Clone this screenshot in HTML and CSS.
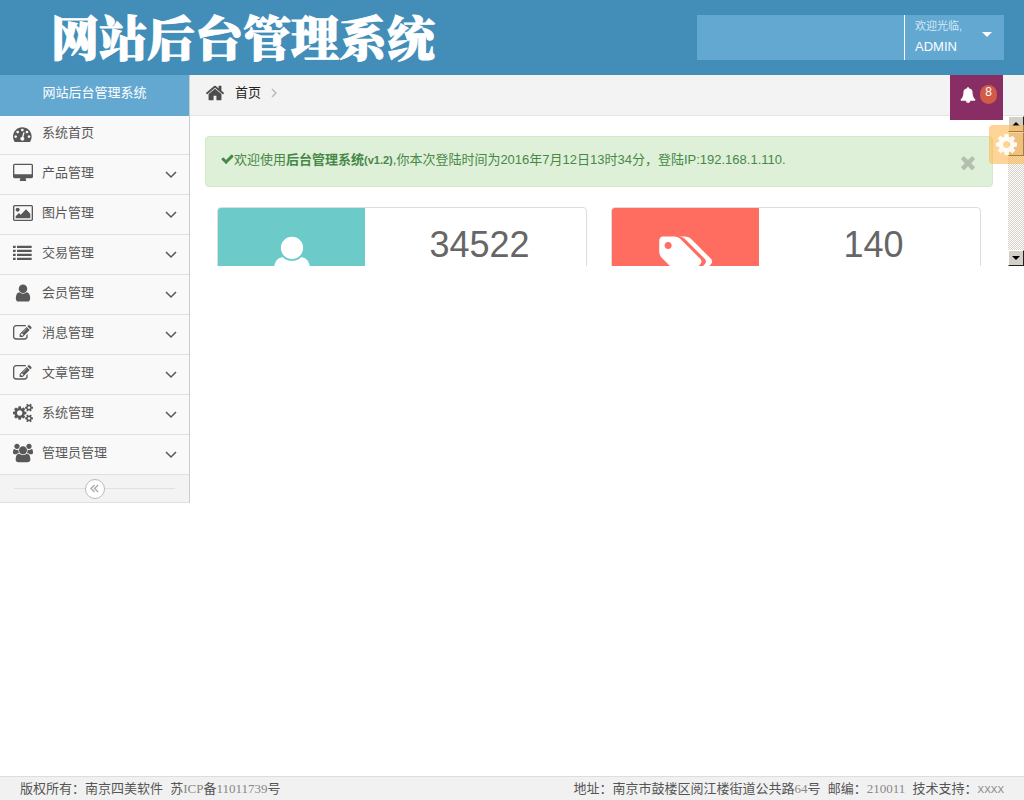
FILE: index.html
```html
<!DOCTYPE html>
<html lang="zh-CN">
<head>
<meta charset="utf-8">
<meta name="viewport" content="width=device-width, initial-scale=1">
<title>网站后台管理系统</title>
<link rel="stylesheet" href="styles.css">
</head>
<body>
<svg class="sprite" aria-hidden="true">
  <symbol id="i-home" viewBox="0 0 1792 1792"><path d="M1472 992v480q0 26-19 45t-45 19h-384v-384h-256v384h-384q-26 0-45-19t-19-45v-480q0-1 .5-3t.5-3l575-474 575 474q1 2 1 6zm223-69l-62 74q-8 9-21 11h-3q-13 0-21-7l-692-577-692 577q-12 8-24 7-13-2-21-11l-62-74q-8-10-7-23.500t11-21.500l719-599q32-26 76-26t76 26l244 204v-195q0-14 9-23t23-9h192q14 0 23 9t9 23v408l219 182q10 8 11 21.500t-7 23.500z"/></symbol>
  <symbol id="i-dash" viewBox="0 0 1920 1792"><path d="M384 1152q0-53-37.500-90.500t-90.500-37.500-90.500 37.500-37.500 90.500 37.500 90.500 90.500 37.500 90.500-37.500 37.500-90.500zm192-448q0-53-37.500-90.500t-90.500-37.500-90.500 37.500-37.500 90.500 37.500 90.500 90.500 37.500 90.500-37.500 37.500-90.500zm428 481l101-382q6-26-7.500-48.500t-38.500-29.500-48 6.500-30 39.500l-101 382q-60 5-107 43.500t-63 98.500q-20 77 20 146t117 89 146-20 89-117q16-60-6-117t-72-91zm660-33q0-53-37.500-90.500t-90.500-37.500-90.500 37.500-37.500 90.500 37.500 90.500 90.500 37.500 90.500-37.500 37.500-90.500zm-640-640q0-53-37.500-90.500t-90.500-37.500-90.500 37.500-37.500 90.500 37.500 90.500 90.500 37.500 90.500-37.500 37.500-90.500zm448 192q0-53-37.500-90.500t-90.500-37.500-90.500 37.500-37.500 90.500 37.500 90.500 90.500 37.500 90.500-37.500 37.500-90.500zm320 448q0 261-141 483-19 29-54 29h-1402q-35 0-54-29-141-221-141-483 0-182 71-348t191-286 286-191 348-71 348 71 286 191 191 286 71 348z"/></symbol>
  <symbol id="i-desktop" viewBox="0 0 1920 1792"><path d="M1792 992v-832q0-13-9.500-22.500t-22.500-9.500h-1600q-13 0-22.500 9.500t-9.500 22.500v832q0 13 9.500 22.500t22.500 9.500h1600q13 0 22.500-9.500t9.500-22.500zm128-832v1088q0 66-47 113t-113 47h-544q0 37 16 77.500t32 71 16 43.500q0 26-19 45t-45 19h-512q-26 0-45-19t-19-45q0-14 16-44t32-70 16-78h-544q-66 0-113-47t-47-113v-1088q0-66 47-113t113-47h1600q66 0 113 47t47 113z"/></symbol>
  <symbol id="i-picture" viewBox="-64 0 1920 1792"><path d="M576 576q0 80-56 136t-136 56-136-56-56-136 56-136 136-56 136 56 56 136zm1024 384v448h-1408v-192l320-320 160 160 512-512zm96-704h-1600q-13 0-22.500 9.500t-9.500 22.500v1216q0 13 9.500 22.500t22.500 9.500h1600q13 0 22.500-9.500t9.500-22.500v-1216q0-13-9.500-22.500t-22.500-9.500zm160 32v1216q0 66-47 113t-113 47h-1600q-66 0-113-47t-47-113v-1216q0-66 47-113t113-47h1600q66 0 113 47t47 113z"/></symbol>
  <symbol id="i-list" viewBox="0 0 1920 1792"><path d="M0 192h256v224H0zM384 192h1408v224H384zM0 576h256v224H0zM384 576h1408v224H384zM0 960h256v224H0zM384 960h1408v224H384zM0 1344h256v224H0zM384 1344h1408v224H384z"/></symbol>
  <symbol id="i-user" viewBox="0 0 1792 1792"><path d="M1536 1399q0 109-62.500 187t-150.500 78h-854q-88 0-150.500-78t-62.500-187q0-85 8.500-160.500t31.500-152 58.500-131 94-89 134.500-34.500q131 128 313 128t313-128q76 0 134.500 34.500t94 89 58.500 131 31.500 152 8.500 160.500zm-256-887q0 159-112.500 271.500t-271.500 112.500-271.500-112.500-112.500-271.500 112.500-271.500 271.500-112.500 271.500 112.500 112.500 271.500z"/></symbol>
  <symbol id="i-edit" viewBox="0 0 1920 1792"><path d="M888 1184l116-116-152-152-116 116v56h96v96h56zm440-720q-16-16-33 1l-350 350q-17 17-1 33t33-1l350-350q17-17 1-33zm80 594v190q0 119-84.500 203.500t-203.500 84.500h-832q-119 0-203.500-84.500t-84.500-203.500v-832q0-119 84.500-203.500t203.500-84.500h832q63 0 117 25 15 7 18 23 3 17-9 29l-49 49q-14 14-32 8-23-6-45-6h-832q-66 0-113 47t-47 113v832q0 66 47 113t113 47h832q66 0 113-47t47-113v-126q0-13 9-22l64-64q15-15 35-7t20 29zm-96-738l288 288-672 672h-288v-288zm444 132l-92 92-288-288 92-92q28-28 68-28t68 28l152 152q28 28 28 68t-28 68z"/></symbol>
  <symbol id="i-cogs" viewBox="0 0 1920 1792"><path d="M896 896q0-106-75-181t-181-75-181 75-75 181 75 181 181 75 181-75 75-181zm768 512q0-52-38-90t-90-38-90 38-38 90q0 53 37.500 90.500t90.500 37.500 90.500-37.500 37.500-90.500zm0-1024q0-52-38-90t-90-38-90 38-38 90q0 53 37.500 90.500t90.500 37.500 90.500-37.500 37.500-90.500zm-384 421v185q0 10-7 19.500t-16 10.500l-155 24q-11 35-32 76 34 48 90 115 7 11 7 20 0 12-7 19-23 30-82.500 89.500t-78.500 59.500q-11 0-21-7l-115-90q-37 19-77 31-11 108-23 155-7 24-30 24h-186q-11 0-20-7.500t-10-17.500l-23-153q-34-10-75-31l-118 89q-7 7-20 7-11 0-21-8-144-133-144-160 0-9 7-19 10-14 41-53t47-61q-23-44-35-82l-152-24q-10-1-17-9.500t-7-19.500v-185q0-10 7-19.500t16-10.500l155-24q11-35 32-76-34-48-90-115-7-11-7-20 0-12 7-20 22-30 82-89t79-59q11 0 21 7l115 90q34-18 77-32 11-108 23-154 7-24 30-24h186q11 0 20 7.500t10 17.500l23 153q34 10 75 31l118-89q8-7 20-7 11 0 21 8 144 133 144 160 0 8-7 19-12 16-42 54t-45 60q23 48 34 82l152 23q10 2 17 10.500t7 19.500zm640 533v140q0 16-149 31-12 27-30 52 51 113 51 138 0 4-4 7-122 71-124 71-8 0-46-47t-52-68q-20 2-30 2t-30-2q-14 21-52 68t-46 47q-2 0-124-71-4-3-4-7 0-25 51-138-18-25-30-52-149-15-149-31v-140q0-16 149-31 13-29 30-52-51-113-51-138 0-4 4-7 4-2 35-20t59-34 30-16q8 0 46 46.500t52 67.500q20-2 30-2t30 2q51-71 92-112l6-2q4 0 124 70 4 3 4 7 0 25-51 138 17 23 30 52 149 15 149 31zm0-1024v140q0 16-149 31-12 27-30 52 51 113 51 138 0 4-4 7-122 71-124 71-8 0-46-47t-52-68q-20 2-30 2t-30-2q-14 21-52 68t-46 47q-2 0-124-71-4-3-4-7 0-25 51-138-18-25-30-52-149-15-149-31v-140q0-16 149-31 13-29 30-52-51-113-51-138 0-4 4-7 4-2 35-20t59-34 30-16q8 0 46 46.500t52 67.500q20-2 30-2t30 2q51-71 92-112l6-2q4 0 124 70 4 3 4 7 0 25-51 138 17 23 30 52 149 15 149 31z"/></symbol>
  <symbol id="i-users" viewBox="0 0 1920 1792"><path d="M593 896q-162 5-265 128h-134q-82 0-138-40.500t-56-118.500q0-353 124-353 6 0 43.500 21t97.500 42.500 119 21.500q67 0 133-23-5 37-5 66 0 139 81 256zm1071 637q0 120-73 189.500t-194 69.500h-874q-121 0-194-69.500t-73-189.500q0-53 3.500-103.500t14-109 26.500-108.500 43-97.500 62-81 85.500-53.500 111.500-20q10 0 43 21.500t73 48 107 48 135 21.500 135-21.500 107-48 73-48 43-21.500q61 0 111.500 20t85.500 53.500 62 81 43 97.500 26.500 108.500 14 109 3.500 103.500zm-1024-1277q0 106-75 181t-181 75-181-75-75-181 75-181 181-75 181 75 75 181zm704 384q0 159-112.500 271.500t-271.500 112.500-271.500-112.500-112.500-271.500 112.500-271.500 271.500-112.500 271.500 112.500 112.500 271.500zm576 225q0 78-56 118.500t-138 40.500h-134q-103-123-265-128 81-117 81-256 0-29-5-66 66 23 133 23 59 0 119-21.500t97.500-42.500 43.500-21q124 0 124 353zm-128-609q0 106-75 181t-181 75-181-75-75-181 75-181 181-75 181 75 75 181z"/></symbol>
  <symbol id="i-cog" viewBox="128 128 1536 1536"><path d="M1152 896q0-106-75-181t-181-75-181 75-75 181 75 181 181 75 181-75 75-181zm512-109v222q0 12-8 23t-20 13l-185 28q-19 54-39 91 35 50 107 138 10 12 10 25t-9 23q-27 37-99 108t-94 71q-12 0-26-9l-138-108q-44 23-91 38-16 136-29 186-7 28-36 28h-222q-14 0-24.500-8.500t-11.500-21.500l-28-184q-49-16-90-37l-141 107q-10 9-25 9-14 0-25-11-126-114-165-168-7-10-7-23 0-12 8-23 15-21 51-66.500t54-70.500q-27-50-41-99l-183-27q-13-2-21-12.500t-8-23.500v-222q0-12 8-23t19-13l186-28q14-46 39-92-40-57-107-138-10-12-10-24 0-10 9-23 26-36 98.500-107.500t94.500-71.500q13 0 26 10l138 107q44-23 91-38 16-136 29-186 7-28 36-28h222q14 0 24.500 8.500t11.500 21.500l28 184q49 16 90 37l142-107q9-9 24-9 13 0 25 10 129 119 165 170 7 8 7 22 0 12-8 23-15 21-51 66.500t-54 70.500q26 50 41 98l183 28q13 2 21 12.500t8 23.500z"/></symbol>
  <symbol id="i-bell" viewBox="0 0 1792 1792"><path d="M912 1696q0-16-16-16-59 0-101.500-42.500t-42.500-101.500q0-16-16-16t-16 16q0 73 51.500 124.500t124.500 51.500q16 0 16-16zm816-288q0 52-38 90t-90 38h-448q0 106-75 181t-181 75-181-75-75-181h-448q-52 0-90-38t-38-90q50-42 91-88t85-119.500 74.500-158.500 50-206 19.500-260q0-152 117-282.500t307-158.500q-8-19-8-39 0-40 28-68t68-28 68 28 28 68q0 20-8 39 190 28 307 158.500t117 282.500q0 139 19.500 260t50 206 74.500 158.500 85 119.500 91 88z"/></symbol>
  <symbol id="i-tags" viewBox="0 0 1920 1792"><path d="M448 448q0-53-37.500-90.500t-90.500-37.500-90.500 37.500-37.500 90.500 37.500 90.500 90.500 37.500 90.500-37.500 37.500-90.500zm1067 576q0 53-37 90l-491 492q-39 37-91 37-53 0-90-37l-715-716q-38-37-64.500-101t-26.500-117v-416q0-52 38-90t90-38h416q53 0 117 26.500t102 64.500l715 714q37 39 37 91zm384 0q0 53-37 90l-491 492q-39 37-91 37-36 0-59-14t-53-45l470-470q37-37 37-90 0-52-37-91l-715-714q-38-38-102-64.500t-117-26.500h224q53 0 117 26.500t102 64.500l715 714q37 39 37 91z"/></symbol>
  <symbol id="i-check" viewBox="100 128 1600 1536"><path d="M1671 566q0 40-28 68l-724 724-136 136q-28 28-68 28t-68-28l-136-136-362-362q-28-28-28-68t28-68l136-136q28-28 68-28t68 28l294 295 656-657q28-28 68-28t68 28l136 136q28 28 28 68z"/></symbol>
  <symbol id="i-times" viewBox="302 334 1188 1220"><path d="M1490 1322q0 40-28 68l-136 136q-28 28-68 28t-68-28l-294-294-294 294q-28 28-68 28t-68-28l-136-136q-28-28-28-68t28-68l294-294-294-294q-28-28-28-68t28-68l136-136q28-28 68-28t68 28l294 294 294-294q28-28 68-28t68 28l136 136q28 28 28 68t-28 68l-294 294 294 294q28 28 28 68z"/></symbol>
  <symbol id="i-down" viewBox="0 0 12 8"><path class="line" d="M1 1l5 5 5-5"/></symbol>
</svg>

<header class="header">
  <h1 class="logo">网站后台管理系统</h1>
  <div class="userbar">
    <button class="user" type="button">
      <span class="user-text"><small class="welcome">欢迎光临,</small><span class="name">ADMIN</span></span>
      <span class="caret"></span>
    </button>
  </div>
</header>

<div class="main">
  <nav class="sidebar">
    <h2 class="side-title">网站后台管理系统</h2>
    <ul class="menu">
      <li><a href="#"><svg class="ico"><use href="#i-dash"/></svg><span>系统首页</span></a></li>
      <li><a href="#"><svg class="ico"><use href="#i-desktop"/></svg><span>产品管理</span><svg class="down"><use href="#i-down"/></svg></a></li>
      <li><a href="#"><svg class="ico"><use href="#i-picture"/></svg><span>图片管理</span><svg class="down"><use href="#i-down"/></svg></a></li>
      <li><a href="#"><svg class="ico"><use href="#i-list"/></svg><span>交易管理</span><svg class="down"><use href="#i-down"/></svg></a></li>
      <li><a href="#"><svg class="ico"><use href="#i-user"/></svg><span>会员管理</span><svg class="down"><use href="#i-down"/></svg></a></li>
      <li><a href="#"><svg class="ico"><use href="#i-edit"/></svg><span>消息管理</span><svg class="down"><use href="#i-down"/></svg></a></li>
      <li><a href="#"><svg class="ico"><use href="#i-edit"/></svg><span>文章管理</span><svg class="down"><use href="#i-down"/></svg></a></li>
      <li><a href="#"><svg class="ico"><use href="#i-cogs"/></svg><span>系统管理</span><svg class="down"><use href="#i-down"/></svg></a></li>
      <li><a href="#"><svg class="ico"><use href="#i-users"/></svg><span>管理员管理</span><svg class="down"><use href="#i-down"/></svg></a></li>
    </ul>
    <div class="collapse">
      <button class="collapse-btn" type="button" aria-label="收起菜单"><svg class="dbl" viewBox="0 0 10 10"><path class="line" d="M5 1L1 5l4 4M9 1L5 5l4 4"/></svg></button>
    </div>
  </nav>

  <div class="content">
    <div class="crumbs">
      <svg class="home"><use href="#i-home"/></svg>
      <a class="crumb" href="#">首页</a>
      <svg class="sep" viewBox="0 0 6 10"><path class="line" d="M1 1l4 4-4 4"/></svg>
      <button class="notice" type="button" aria-label="通知"><svg class="bell"><use href="#i-bell"/></svg><span class="badge">8</span></button>
    </div>

    <div class="frame">
      <div class="page">
        <div class="alert">
          <p class="alert-text"><svg class="check"><use href="#i-check"/></svg>欢迎使用<strong>后台管理系统<small>(v1.2)</small></strong>,你本次登陆时间为2016年7月12日13时34分，登陆IP:192.168.1.110.</p>
          <button class="close" type="button" aria-label="关闭"><svg class="times"><use href="#i-times"/></svg></button>
        </div>
        <div class="cards">
          <section class="card">
            <div class="card-icon teal"><svg class="big-user"><use href="#i-user"/></svg></div>
            <div class="card-num">34522</div>
          </section>
          <section class="card">
            <div class="card-icon red"><svg class="big-tags"><use href="#i-tags"/></svg></div>
            <div class="card-num">140</div>
          </section>
        </div>
      </div>
      <div class="scroll" aria-hidden="true">
        <span class="sbtn"><i class="up"></i></span>
        <span class="thumb"></span>
        <span class="sbtn last"><i class="dn"></i></span>
      </div>
      <button class="settings" type="button" aria-label="设置"><svg class="cog"><use href="#i-cog"/></svg></button>
    </div>
  </div>
</div>

<footer class="footer">
  <span>版权所有：南京四美软件&nbsp; 苏<span class="lat">ICP</span>备<span class="lat">11011739</span>号</span>
  <span>地址：南京市鼓楼区阅江楼街道公共路<span class="lat">64</span>号&nbsp; 邮编：<span class="lat">210011</span>&nbsp; 技术支持：<span class="mono">XXXX</span></span>
</footer>
</body>
</html>
```
FILE: styles.css
```css
* { box-sizing: border-box; }
body {
  margin: 0;
  min-height: 100vh;
  display: flex;
  flex-direction: column;
  background: #fff;
  color: #393939;
  font: 13px/20px "Liberation Sans", "Noto Sans CJK SC", sans-serif;
}
h1, h2, p, ul { margin: 0; padding: 0; font-weight: normal; }
ul { list-style: none; }
a { color: inherit; text-decoration: none; }
button { font: inherit; color: inherit; border: 0; padding: 0; background: none; cursor: pointer; }
svg { display: block; fill: currentColor; flex: none; }
.sprite { position: absolute; width: 0; height: 0; }
.line { fill: none; stroke: currentColor; stroke-width: 1.5; }

.header {
  display: flex;
  justify-content: space-between;
  align-items: center;
  height: 75px;
  padding: 0 20px 0 51px;
  background: #438eb9;
  color: #fff;
}
.logo {
  padding-bottom: 4px;
  font: 900 48px/70px "Noto Serif CJK SC", "Noto Sans CJK SC", serif;
  -webkit-text-stroke: 1px #fff;
  white-space: nowrap;
}
.userbar {
  display: flex;
  justify-content: flex-end;
  width: 30vw;
  height: 45px;
  background: #62a8d1;
}
.user {
  display: flex;
  align-items: center;
  justify-content: space-between;
  width: 100px;
  padding: 0 12px 0 10px;
  border-left: 1px solid #fff;
  text-align: left;
}
.user-text { display: flex; flex-direction: column; padding-bottom: 2px; }
.welcome { font-size: 11px; color: #d5e8f4; }
.name { font-size: 13px; line-height: 22px; }
.caret {
  margin-bottom: 7px;
  border: 5px solid transparent;
  border-top-color: #fff;
  border-bottom: 0;
}

.main { display: flex; flex: 1; align-items: flex-start; }
.sidebar {
  flex: none;
  width: 190px;
  border-right: 1px solid #ccc;
  background: #f9f9f9;
}
.side-title {
  height: 41px;
  background: #62a8d1;
  color: #fff;
  font-size: 13px;
  line-height: 36px;
  text-align: center;
}
.menu li { height: 40px; border-bottom: 1px solid #e0e0e0; }
.menu li:first-child { height: 39px; }
.menu a {
  display: flex;
  align-items: center;
  gap: 9px;
  height: 100%;
  padding: 0 12px 0 13px;
  color: #585858;
}
.menu span { flex: 1; padding-bottom: 4px; }
.ico { width: 20px; height: 20px; margin-bottom: 3px; }
.down { width: 12px; height: 8px; }
.collapse {
  display: flex;
  align-items: center;
  height: 28px;
  padding: 0 14px;
  border-bottom: 1px solid #e0e0e0;
  background: #f3f3f3;
}
.collapse::before, .collapse::after { content: ""; flex: 1; height: 1px; background: #e0e0e0; }
.collapse-btn {
  display: grid;
  place-items: center;
  width: 20px;
  height: 20px;
  border: 1px solid #bbb;
  border-radius: 50%;
  background: #fff;
  color: #aaa;
}
.dbl { width: 9px; height: 9px; }

.content { flex: 1; min-width: 0; }
.crumbs {
  display: flex;
  align-items: center;
  height: 41px;
  padding: 0 21px 4px 15px;
  border-bottom: 1px solid #e5e5e5;
  background: #f3f3f3;
}
.home { width: 20px; height: 20px; color: #4c4c4c; }
.crumb { margin: 0 10px; color: #222; }
.sep { width: 6px; height: 10px; color: #bbb; }
.notice {
  display: flex;
  align-items: center;
  align-self: flex-start;
  gap: 4px;
  width: 53px;
  height: 45px;
  margin-left: auto;
  padding: 0 6px 6px 10px;
  background: #892e65;
  color: #fff;
  z-index: 1;
}
.bell { width: 16px; height: 16px; }
.badge {
  width: 17px;
  height: 19px;
  border-radius: 9px;
  background: #d15b47;
  font-size: 12px;
  line-height: 15px;
  text-align: center;
}

.frame { position: relative; display: flex; height: 150px; overflow: hidden; }
.page { flex: 1; padding: 20px 15px 0; }
.alert {
  display: flex;
  justify-content: space-between;
  padding: 13px 17px 16px 15px;
  border: 1px solid #d6e9c6;
  border-radius: 4px;
  background: #dff0d8;
  color: #468847;
}
.alert small { font-size: 11px; }
.check { display: inline-block; width: 13px; height: 12px; vertical-align: -1px; }
.close { align-self: flex-end; color: #b2c0ad; }
.times { width: 14px; height: 14px; }
.cards { display: flex; gap: 24px; padding: 20px 12px 0; }
.card {
  display: flex;
  flex: 1;
  height: 100px;
  border: 1px solid #ddd;
  border-radius: 4px;
  overflow: hidden;
}
.card-icon {
  display: flex;
  justify-content: center;
  width: 40%;
  padding-top: 25px;
  color: #fff;
}
.teal { background: #6ccac9; }
.red { background: #ff6c60; }
.big-user { width: 52px; height: 52px; }
.big-tags { width: 54px; height: 50px; }
.card-num {
  flex: 1;
  padding: 17px 0 0 8px;
  color: #666;
  font-size: 36px;
  line-height: 40px;
  text-align: center;
}

.scroll {
  display: flex;
  flex-direction: column;
  width: 16px;
  background: repeating-conic-gradient(#d4d0c8 0 25%, #fff 0 50%) 0 0 / 2px 2px;
}
.sbtn, .thumb {
  display: grid;
  place-items: center;
  height: 16px;
  border: 1px solid #fff;
  border-right-color: #222;
  border-bottom-color: #222;
  background: #d4d0c8;
}
.thumb { height: 24px; }
.last { margin-top: auto; }
.up, .dn { border: 4px solid transparent; }
.up { border-top: 0; border-bottom-color: #000; }
.dn { border-bottom: 0; border-top-color: #000; }
.settings {
  position: absolute;
  top: 9px;
  right: 0;
  width: 35px;
  height: 39px;
  padding-left: 7px;
  border-radius: 4px 0 0 4px;
  background: rgba(255, 183, 82, 0.6);
  color: rgba(255, 255, 255, 0.9);
}
.cog { width: 21px; height: 21px; }

.footer {
  display: flex;
  justify-content: space-between;
  padding: 0 20px;
  border-top: 1px solid #ddd;
  background: #f1f1f1;
  color: #555;
  line-height: 23px;
}
.lat { color: #888; font-family: "Liberation Serif", serif; line-height: 1; }
.mono { color: #888; font-family: "Liberation Mono", monospace; font-size: 11px; line-height: 1; }
```
